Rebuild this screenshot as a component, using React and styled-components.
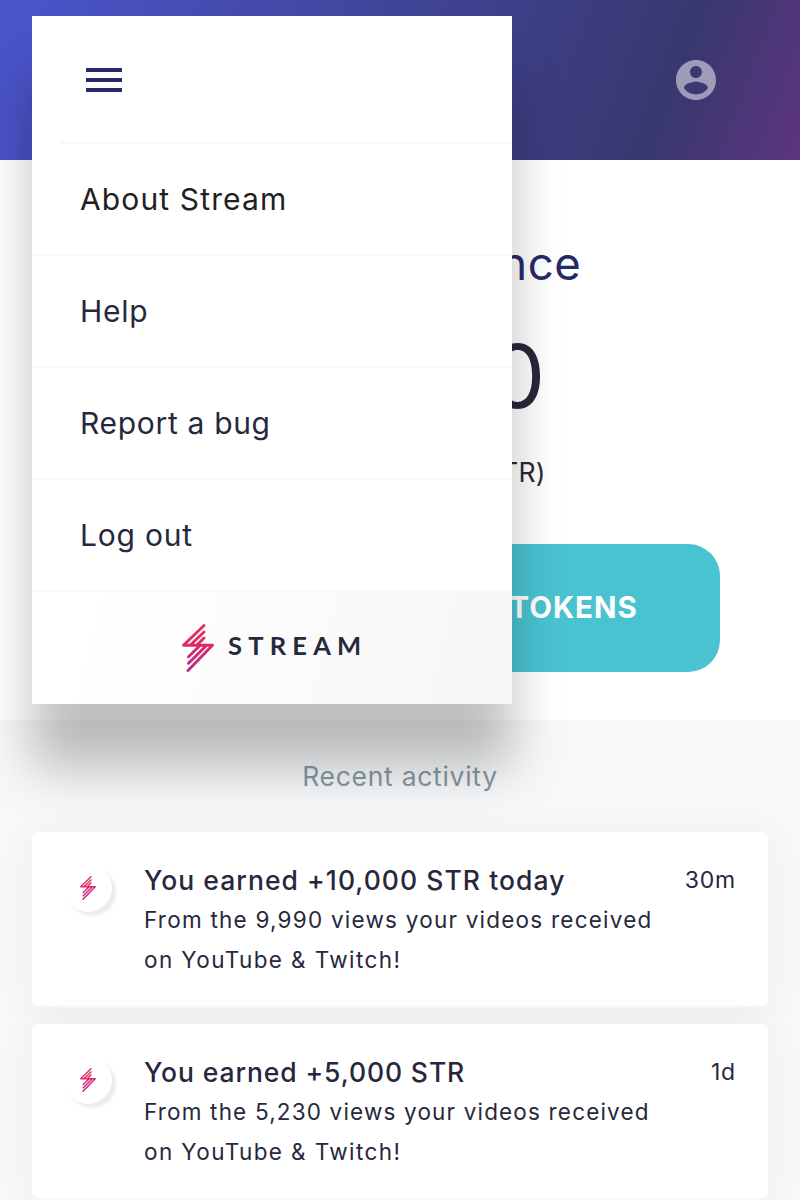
import React from 'react';
import styled, { createGlobalStyle } from 'styled-components';

const GlobalStyle = createGlobalStyle`
  * { box-sizing: border-box; }
  html, body { margin: 0; padding: 0; }
  body {
    width: 800px;
    height: 1200px;
    overflow: hidden;
    background: #f6f8fa;
    color: #27283b;
    font-family: Inter, 'Liberation Sans', sans-serif;
  }
`;

const Screen = styled.div`
  position: relative;
  width: 800px;
  height: 1200px;
  overflow: hidden;
  display: flex;
  flex-direction: column;
`;

const Header = styled.header`
  flex: none;
  height: 160px;
  padding: 0 80px;
  display: flex;
  align-items: center;
  justify-content: flex-end;
  background: linear-gradient(110.5deg, #4b55cd 0%, #38386f 82%, #5d357e 100%);
`;

const Balance = styled.section`
  flex: none;
  height: 560px;
  padding: 74px 80px 48px;
  display: flex;
  flex-direction: column;
  align-items: center;
  background: #fff;
`;

const BalanceTitle = styled.h1`
  margin: 0;
  padding-left: 7px;
  font-size: 45.5px;
  font-weight: 400;
  line-height: 60px;
  letter-spacing: 0.6px;
  color: #262b68;
`;

const Amount = styled.div`
  margin-top: 26px;
  font-size: 88px;
  font-weight: 400;
  line-height: 112px;
  letter-spacing: 3px;
`;

const Unit = styled.div`
  margin-top: 20px;
  padding-left: 28px;
  font-size: 26.5px;
  font-weight: 400;
  line-height: 40px;
  letter-spacing: 0.3px;
`;

const TokensButton = styled.button`
  margin-top: auto;
  width: 640px;
  height: 128px;
  padding: 0 0 2px 34px;
  border: 0;
  border-radius: 32px;
  background: #4ac3d1;
  color: #fff;
  font: 700 29.5px Inter, sans-serif;
  letter-spacing: 1px;
`;

const Activity = styled.section`
  flex: 1;
  padding: 36px 32px 0;
`;

const ActivityTitle = styled.h2`
  margin: 0 0 36px;
  text-align: center;
  font-size: 26.5px;
  font-weight: 400;
  line-height: 40px;
  letter-spacing: 0.7px;
  color: #8599a3;
`;

const CardList = styled.div`
  display: flex;
  flex-direction: column;
  gap: 16px;
`;

const Card = styled.article`
  height: 176px;
  padding: 28px 32px 0 40px;
  display: flex;
  border-radius: 8px;
  border-bottom: 2px solid #f7f7f8;
  background: #fff;
  box-shadow: 0 4px 40px rgba(0, 0, 0, 0.05);
`;

const Avatar = styled.div`
  flex: none;
  width: 48px;
  height: 48px;
  margin: 4px 32px 0 -8px;
  display: flex;
  align-items: center;
  justify-content: center;
  border-radius: 50%;
  background: #fff;
  box-shadow: 4px 4px 3px #e9ecf0;
`;

const CardBody = styled.div`
  flex: 1;
`;

const CardTitle = styled.h3`
  margin: 0;
  font-size: 26.5px;
  font-weight: 500;
  line-height: 40px;
  letter-spacing: ${(p) => p.$spacing}px;
`;

const CardText = styled.p`
  margin: 0;
  font-size: 22.5px;
  line-height: 40px;
  white-space: nowrap;
  letter-spacing: ${(p) => p.$spacing}px;
`;

const Time = styled.time`
  font-size: 23px;
  line-height: 40px;
  letter-spacing: 0.8px;
`;

const Menu = styled.nav`
  position: absolute;
  left: 32px;
  top: 16px;
  width: 480px;
  height: 688px;
  display: flex;
  flex-direction: column;
  background: #fff;
  box-shadow: 0 64px 48px rgba(0, 0, 0, 0.25);
`;

const MenuTop = styled.div`
  height: 128px;
  margin-left: 28px;
  padding: 2px 0 0 26px;
  display: flex;
  align-items: center;
  border-bottom: 2px solid #f7f7f7;
`;

const MenuItem = styled.a`
  height: 112px;
  padding: 0 0 0 48px;
  border-bottom: 2px solid #f7f7f7;
  font-size: 30px;
  font-weight: 400;
  line-height: 111px;
  letter-spacing: ${(p) => p.$spacing}px;
  color: ${(p) => (p.$active ? '#212121' : '#27283b')};
`;

const MenuFooter = styled.div`
  flex: 1;
  padding: 0 0 1px 150px;
  display: flex;
  align-items: center;
  gap: 14px;
  background: linear-gradient(104deg, #fff 12%, #f6f6f6 100%);
`;

const Wordmark = styled.span`
  padding-bottom: 6px;
  font-family: Lato, sans-serif;
  font-size: 25.5px;
  font-weight: 700;
  line-height: 32px;
  letter-spacing: 6.2px;
`;

function Bolt({ id, width, height }) {
  return (
    <svg width={width} height={height} viewBox="0 0 32 48" fill="none">
      <defs>
        <linearGradient id={id} x1="0" y1="0" x2="0" y2="48" gradientUnits="userSpaceOnUse">
          <stop stopColor="#ee3350" />
          <stop offset="0.45" stopColor="#dc2a68" />
          <stop offset="1" stopColor="#b32b92" />
        </linearGradient>
      </defs>
      <path
        d="M22 1.5L1.5 21.3H30.5L6 46.5M22 8L9 20.5M22 14L15.5 20.5M6.5 39.3L24.2 21.8M6.5 32.8L17.8 21.8"
        stroke={`url(#${id})`}
        strokeWidth="2.9"
        strokeLinecap="round"
        strokeLinejoin="round"
      />
    </svg>
  );
}

const MENU = [
  { label: 'About Stream', active: true, spacing: 1.13 },
  { label: 'Help', spacing: 0.7 },
  { label: 'Report a bug', spacing: 0.68 },
  { label: 'Log out', spacing: 0.8 },
];

const CARDS = [
  {
    title: 'You earned +10,000 STR today',
    titleSpacing: 1.05,
    lines: [
      { text: 'From the 9,990 views your videos received', spacing: 1.23 },
      { text: 'on YouTube & Twitch!', spacing: 1.4 },
    ],
    time: '30m',
  },
  {
    title: 'You earned +5,000 STR',
    titleSpacing: 0.9,
    lines: [
      { text: 'From the 5,230 views your videos received', spacing: 1.17 },
      { text: 'on YouTube & Twitch!', spacing: 1.4 },
    ],
    time: '1d',
  },
];

export default function App() {
  return (
    <Screen>
      <GlobalStyle />
      <Header>
        <svg width="48" height="48" viewBox="0 0 24 24" fill="#fff" fillOpacity="0.5">
          <path d="M12 2C6.48 2 2 6.48 2 12s4.48 10 10 10 10-4.48 10-10S17.52 2 12 2zm0 3c1.66 0 3 1.34 3 3s-1.34 3-3 3-3-1.34-3-3 1.34-3 3-3zm0 14.2c-2.5 0-4.71-1.28-6-3.22.03-1.99 4-3.08 6-3.08 1.99 0 5.97 1.09 6 3.08-1.29 1.94-3.5 3.22-6 3.22z" />
        </svg>
      </Header>
      <Balance>
        <BalanceTitle>Current Balance</BalanceTitle>
        <Amount>10,000</Amount>
        <Unit>Stream tokens (STR)</Unit>
        <TokensButton>TRANSFER STREAM TOKENS</TokensButton>
      </Balance>
      <Activity>
        <ActivityTitle>Recent activity</ActivityTitle>
        <CardList>
          {CARDS.map((c, i) => (
            <Card key={c.title}>
              <Avatar>
                <Bolt id={`bolt-${i}`} width={16} height={24} />
              </Avatar>
              <CardBody>
                <CardTitle $spacing={c.titleSpacing}>{c.title}</CardTitle>
                {c.lines.map((l) => (
                  <CardText key={l.text} $spacing={l.spacing}>{l.text}</CardText>
                ))}
              </CardBody>
              <Time>{c.time}</Time>
            </Card>
          ))}
        </CardList>
      </Activity>
      <Menu>
        <MenuTop>
          <svg width="36" height="24" fill="#262b68">
            <path d="M0 0h36v4H0zM0 10h36v4H0zM0 20h36v4H0z" />
          </svg>
        </MenuTop>
        {MENU.map((m) => (
          <MenuItem key={m.label} $active={m.active} $spacing={m.spacing}>{m.label}</MenuItem>
        ))}
        <MenuFooter>
          <Bolt id="bolt-menu" width={32} height={48} />
          <Wordmark>STREAM</Wordmark>
        </MenuFooter>
      </Menu>
    </Screen>
  );
}
